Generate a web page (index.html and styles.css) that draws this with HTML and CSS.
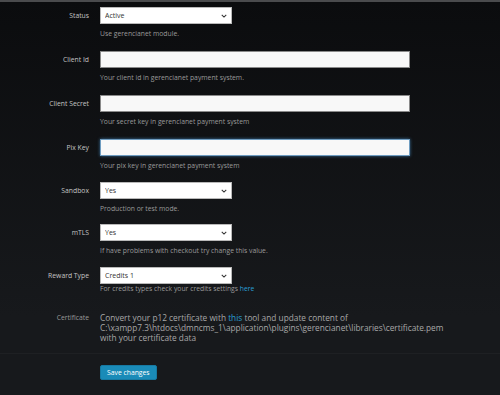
FILE: index.html
```html
<!DOCTYPE html>
<html lang="en">
<head>
    <meta charset="UTF-8">
    <meta name="viewport" content="width=device-width, initial-scale=1.0">
    <title>Gerencianet settings</title>
    <link rel="stylesheet" href="styles.css">
</head>
<body>
    <div class="page">
        <form class="settings-form">
            <!-- status -->
            <div class="form-row">
                <label class="form-label">Status</label>
                <div class="form-ctrl">
                    <span class="select-wrap">
                        <select class="form-select"><option>Active</option></select>
                        <svg class="chevron" viewBox="0 0 8 5" width="6" height="4"><path d="M1 1l3 3 3-3" fill="none" stroke="#333" stroke-width="1.4"/></svg>
                    </span>
                    <p class="help">Use gerencianet module.</p>
                </div>
            </div>

            <div class="form-row">
                <label class="form-label">Client Id</label>
                <div class="form-ctrl">
                    <input class="form-input" type="text">
                    <p class="help">Your client id in gerencianet payment system.</p>
                </div>
            </div>

            <div class="form-row">
                <label class="form-label">Client Secret</label>
                <div class="form-ctrl">
                    <input class="form-input" type="text">
                    <p class="help">Your secret key in gerencianet payment system</p>
                </div>
            </div>

            <div class="form-row gap-11">
                <label class="form-label">Pix Key</label>
                <div class="form-ctrl">
                    <input class="form-input focused" type="text">
                    <p class="help">Your pix key in gerencianet payment system</p>
                </div>
            </div>

            <div class="form-row gap-10">
                <label class="form-label">Sandbox</label>
                <div class="form-ctrl">
                    <span class="select-wrap">
                        <select class="form-select"><option>Yes</option></select>
                        <svg class="chevron" viewBox="0 0 8 5" width="6" height="4"><path d="M1 1l3 3 3-3" fill="none" stroke="#333" stroke-width="1.4"/></svg>
                    </span>
                    <p class="help">Production or test mode.</p>
                </div>
            </div>

            <div class="form-row gap-11">
                <label class="form-label">mTLS</label>
                <div class="form-ctrl">
                    <span class="select-wrap">
                        <select class="form-select"><option>Yes</option></select>
                        <svg class="chevron" viewBox="0 0 8 5" width="6" height="4"><path d="M1 1l3 3 3-3" fill="none" stroke="#333" stroke-width="1.4"/></svg>
                    </span>
                    <p class="help">If have problems with checkout try change this value.</p>
                </div>
            </div>

            <div class="form-row">
                <label class="form-label">Reward Type</label>
                <div class="form-ctrl">
                    <span class="select-wrap">
                        <select class="form-select"><option>Credits 1</option></select>
                        <svg class="chevron" viewBox="0 0 8 5" width="6" height="4"><path d="M1 1l3 3 3-3" fill="none" stroke="#333" stroke-width="1.4"/></svg>
                    </span>
                    <p class="help tight">For credits types check your credits settings <a href="#">here</a></p>
                </div>
            </div>

            <div class="form-row cert-row">
                <label class="form-label">Certificate</label>
                <div class="form-ctrl cert-text">
                    <span>Convert your p12 certificate with <a href="#">this</a> tool and update content of</span>
                    <span>C:\xampp7.3\htdocs\dmncms_1\application\plugins\gerencianet\libraries\certificate.pem</span>
                    <span>with your certificate data</span>
                </div>
            </div>

            <div class="form-actions">
                <button type="button" class="btn-save">Save changes</button>
            </div>
        </form>
    </div>
</body>
</html>
```

FILE: styles.css
```css
body {
    margin: 0;
    font-family: "Open Sans", "Liberation Sans", sans-serif;
    background: #17191c;
}

.page {
    height: 388px;
    border-top: 2px solid #4a4b4d;
    background: linear-gradient(#0b0c0e, #17191c 80%);
    padding-top: 5px;
    overflow: hidden;
}

.form-row {
    display: grid;
    grid-template-columns: 89px 1fr;
    column-gap: 11px;
    margin-bottom: 12px;
}

.form-row.gap-11 {
    margin-bottom: 11px;
}

.form-row.gap-10 {
    margin-bottom: 10px;
}

.form-label {
    text-align: right;
    font-size: 6.8px;
    color: #c4c4c4;
    line-height: 17px;
}

.form-ctrl {
    display: flex;
    flex-direction: column;
    align-items: flex-start;
}

.select-wrap {
    position: relative;
    display: block;
    height: 17px;
}

.form-select {
    display: block;
    appearance: none;
    -webkit-appearance: none;
    width: 132px;
    height: 17px;
    margin: 0;
    padding: 0 0 0 4px;
    border: 1px solid #b9b9b9;
    border-radius: 0;
    background: #fff;
    font-family: inherit;
    font-size: 7px;
    line-height: 15px;
    color: #333;
}

.chevron {
    position: absolute;
    right: 5px;
    top: 7px;
}

.form-input {
    display: block;
    width: 310px;
    height: 17px;
    margin: 0;
    padding: 0 5px;
    box-sizing: border-box;
    border: 1px solid #8a8a8a;
    border-radius: 0;
    background: #f8f8f8;
}

.form-input.focused {
    border-color: #6e9cc0;
    box-shadow: 0 0 3px rgba(82, 168, 236, 0.6);
}

.help {
    margin: 5px 0 0;
    font-size: 6.8px;
    line-height: 10px;
    color: #9a9a9a;
}

.help.tight {
    margin-top: 0;
}

a {
    color: #2a9fd6;
    text-decoration: none;
}

.cert-row {
    margin-top: 19px;
    margin-bottom: 0;
}

.cert-row .form-label {
    line-height: 10px;
    color: #9a9a9a;
}

.cert-text {
    font-size: 8.3px;
    line-height: 10px;
    color: #a8a8a8;
}

.form-actions {
    margin-top: 10px;
    padding: 11px 0 0 100px;
    border-top: 1px solid #1e2023;
}

.btn-save {
    display: block;
    height: 15px;
    padding: 0 6px;
    border: 1px solid #1679a2;
    border-radius: 2px;
    background: #1a8bb8;
    color: #fff;
    font-family: inherit;
    font-size: 6.8px;
    line-height: 13px;
    cursor: pointer;
}
```
